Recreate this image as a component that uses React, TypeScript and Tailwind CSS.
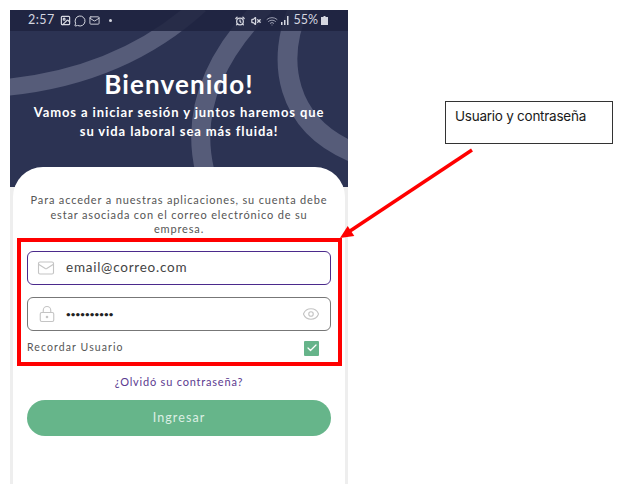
import { AlarmClock, Check, Eye, Image, LockKeyhole, Mail, MessageCircle, VolumeX, Wifi } from 'lucide-react';

const phoneFont = "font-['Lato','Noto_Sans',sans-serif]";

function StatusBar() {
  return (
    <div className="relative z-10 flex h-[21px] items-center justify-between bg-[#1e2340]/85 pl-[18px] pr-[20px] text-[#d5d7e0]">
      <div className="flex items-center gap-[3px]">
        <span className="mr-[2px] text-[12.5px] tracking-[0.5px]">2:57</span>
        <Image size={11} strokeWidth={2.6} />
        <MessageCircle size={12} strokeWidth={2} />
        <Mail size={11} strokeWidth={2} />
        <span className="ml-[6px] h-[3px] w-[3px] rounded-full bg-[#d5d7e0]" />
      </div>
      <div className="flex items-center gap-[3px]">
        <AlarmClock size={10} strokeWidth={3} />
        <VolumeX size={10} strokeWidth={3} className="ml-[3px]" />
        <Wifi size={12} strokeWidth={2} className="ml-[2px] text-[#9a9db0]" />
        <svg width="9" height="9" viewBox="0 0 9 9" fill="currentColor">
          <rect x="0" y="6" width="1.5" height="3" />
          <rect x="3" y="4" width="1.5" height="5" />
          <rect x="6" y="0" width="1.5" height="9" />
        </svg>
        <span className="text-[12.5px]">55%</span>
        <svg width="7" height="9" viewBox="0 0 7 9" fill="currentColor">
          <path d="M2.5 0h2v1H7v8H0V1h2.5z" />
        </svg>
      </div>
    </div>
  );
}

function Hero() {
  return (
    <div className="relative h-[177px] overflow-hidden bg-[#2c3353]">
      <svg className="absolute inset-0" width="338" height="177" viewBox="0 0 338 177" fill="none" stroke="#565c79">
        <path d="M-10 78C60 72 130 50 190 -5" strokeWidth="17" />
        <path d="M195 162C180 100 205 45 255 -5" strokeWidth="19" />
        <path d="M290 -5C265 50 275 115 345 143" strokeWidth="20" />
      </svg>
      <StatusBar />
      <div className="relative flex flex-col items-center pt-[37px] text-center text-white">
        <h1 className="text-[26px] font-bold leading-[32px] tracking-[1.1px]">Bienvenido!</h1>
        <p className="mt-[3px] text-[13px] font-bold leading-[19px] tracking-[0.9px]">
          Vamos a iniciar sesión y juntos haremos que
          <br />
          su vida laboral sea más fluida!
        </p>
      </div>
    </div>
  );
}

function LoginCard() {
  return (
    <div className="relative z-10 mx-[3px] -mt-[20px] flex-1 rounded-t-[30px] bg-white px-[14px] pt-[26px]">
      <p className="text-center text-[11px] leading-[14.5px] tracking-[0.84px] text-[#555]">
        Para acceder a nuestras aplicaciones, su cuenta debe
        <br />
        estar asociada con el correo electrónico de su
        <br />
        empresa.
      </p>
      <div className="mt-[14px] flex h-[34px] items-center rounded-[6px] border-[1.5px] border-[#4b2a8c] pl-[9px]">
        <Mail size={18} strokeWidth={1.5} className="text-[#c4c4c4]" />
        <span className="ml-[11px] text-[13.5px] tracking-[0.75px] text-[#444]">email@correo.com</span>
      </div>
      <div className="mt-[12px] flex h-[34px] items-center justify-between rounded-[6px] border border-[#777] pl-[10px] pr-[10px]">
        <div className="flex items-center">
          <LockKeyhole size={18} strokeWidth={1.5} className="text-[#c4c4c4]" />
          <span className="ml-[10px] text-[8px] font-bold tracking-[0.1px] text-[#222]">••••••••••</span>
        </div>
        <Eye size={18} strokeWidth={1.5} className="text-[#c4c4c4]" />
      </div>
      <div className="mt-[10px] flex h-[15px] items-center justify-between pr-[12px]">
        <span className="text-[10.5px] tracking-[1.1px] text-[#555]">Recordar Usuario</span>
        <span className="flex h-[15px] w-[15px] items-center justify-center rounded-[1px] bg-[#66b48a]">
          <Check size={12} strokeWidth={2.5} className="text-white" />
        </span>
      </div>
      <p className="mt-[18px] text-center text-[11px] tracking-[0.8px] text-[#5b3a90]">¿Olvidó su contraseña?</p>
      <button
        type="button"
        className="mt-[10px] h-[36px] w-full rounded-full bg-[#66b58a] text-[12.5px] tracking-[1.1px] text-[#dcefe4]"
      >
        Ingresar
      </button>
    </div>
  );
}

export default function App() {
  return (
    <div className="relative flex h-[484px] w-[626px] overflow-hidden bg-white pl-[10px] pt-[10px]">
      <div className={`flex w-[338px] flex-col bg-[#eeeeee] ${phoneFont}`}>
        <Hero />
        <LoginCard />
      </div>

      <div className="ml-[97px] mt-[91px] h-[43px] w-[168px] border border-[#333] pl-[9px] pt-[5px] font-['Inter',sans-serif] text-[13.5px] leading-[18px] tracking-[-0.25px] text-[#1a1a1a]">
        Usuario y contraseña
      </div>

      {/* anotaciones encima de la captura */}
      <div className="absolute left-[17px] top-[238px] z-20 h-[128px] w-[325px] border-4 border-[#ff0000]" />
      <svg className="absolute inset-0 z-20" width="626" height="484" viewBox="0 0 626 484">
        <line x1="472" y1="150" x2="350" y2="231" stroke="#ff0000" strokeWidth="3.5" />
        <polygon points="340,238 347.7,226 354.3,236" fill="#ff0000" />
      </svg>
    </div>
  );
}
